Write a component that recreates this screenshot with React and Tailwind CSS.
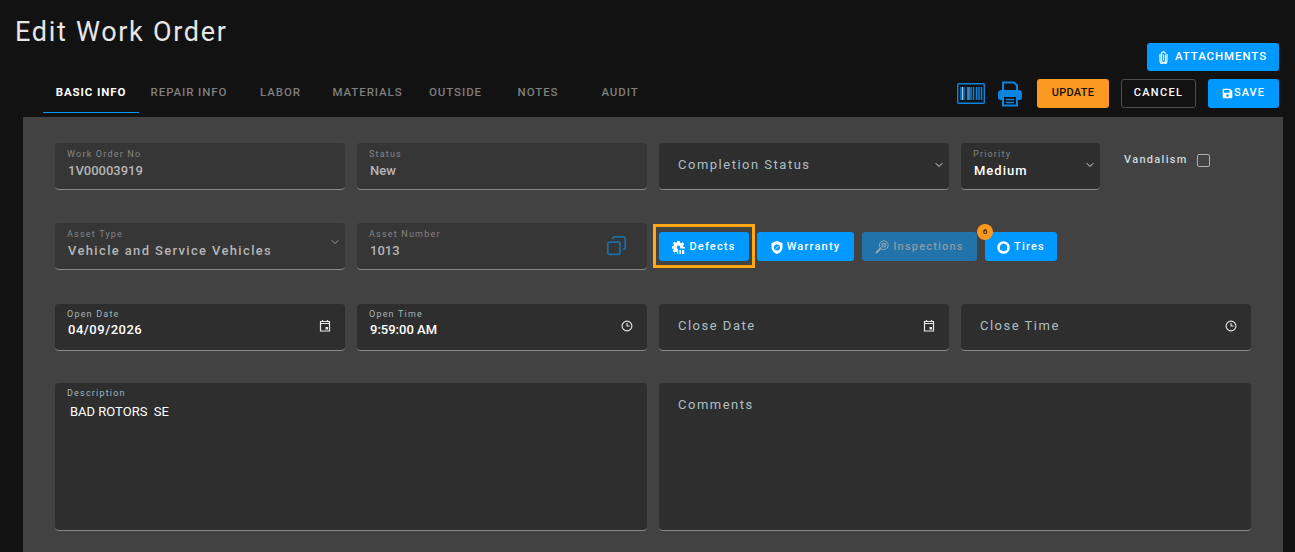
import React from "react";
import { FaSave } from "react-icons/fa";
import { LuChevronDown, LuCopy } from "react-icons/lu";

const tabs = [
  { label: "BASIC INFO", w: "w-[96px]", active: true },
  { label: "REPAIR INFO", w: "w-[100px]" },
  { label: "LABOR", w: "w-[83px]" },
  { label: "MATERIALS", w: "w-[91px]" },
  { label: "OUTSIDE", w: "w-[85px]" },
  { label: "NOTES", w: "w-[80px]" },
  { label: "AUDIT", w: "w-[84px]" },
];

const CalendarIcon = () => (
  <svg width="12" height="13" viewBox="0 0 12 13" fill="none" className="text-[#e8e8e8] mt-[1px]">
    <path d="M1.5 2.5h9v9.5h-9z" stroke="currentColor" strokeWidth="1.2" />
    <path d="M1.5 4.5h9M3.5 1v2M8.5 1v2" stroke="currentColor" strokeWidth="1.2" />
    <rect x="6.5" y="8" width="2.5" height="2.5" fill="currentColor" />
  </svg>
);

const ClockIcon = () => (
  <svg width="12" height="12" viewBox="0 0 12 12" fill="none" className="text-[#e8e8e8] mt-[2px]">
    <circle cx="6" cy="6" r="4.9" stroke="currentColor" strokeWidth="1.1" />
    <path d="M6 3v3h2.6" stroke="currentColor" strokeWidth="1.1" />
  </svg>
);

const Field = ({ label, value, big, icon, dim, className = "", bright }) => (
  <div className={`relative h-[47px] rounded-[4px] border-b border-[#8a8a8a] ${dim ? "bg-[#363636]" : "bg-[#2e2e2e]"} ${className}`}>
    {label && (
      <div className={`pl-3 text-[9px] leading-[10px] tracking-[1.2px] ${bright ? "pt-[5px] text-[#a3b6bd]" : "pt-[6px] text-[#858585]"}`}>
        {label}
      </div>
    )}
    {value && (
      <div className={`pl-[13px] text-[13px] leading-[16px] font-medium ${bright ? "mt-[3px]" : "mt-[4px]"} ${dim ? "text-[#b5b5b5]" : "text-white"}`}>{value}</div>
    )}
    {big && (
      <div className="pl-[19px] pt-[14px] text-[13px] leading-[16px] tracking-[1.5px] text-[#b0bec2]">{big}</div>
    )}
    {icon && <div className="absolute right-[14px] top-[14px] flex">{icon}</div>}
  </div>
);

const BlueBtn = ({ icon, children, className = "" }) => (
  <button className={`h-[29px] pt-[1px] rounded-[3px] text-[11px] font-medium tracking-[1.2px] flex items-center justify-center gap-[4px] ${className}`}>
    {icon}
    {children}
  </button>
);

const PaperclipIcon = () => (
  <svg width="9" height="13" viewBox="0 0 9 13" fill="none" stroke="white" strokeWidth="1.2">
    <path d="M6.500 3.500v6.200a2 2 0 0 1-4 0V2.800a1.900 1.900 0 0 1 3.800 0" />
    <path d="M4.500 3.500v6" />
    <path d="M8 3v6.500a3.500 3.500 0 0 1-7 0V3" />
  </svg>
);

const DefectsIcon = () => (
  <svg width="13" height="13" viewBox="0 0 13 13" fill="white">
    <path d="M5.200 0h2.600l.3 1.700 1 .5 1.600-.9 1.500 2-1.100 1.300.2 1.100 1.700.6v1.200H8.200V6.200a1.700 1.700 0 1 0-3.400 0c0 1 .5 1.600 1.300 1.800V13H5.200l-.3-1.700-1-.5-1.600 1-1.500-2 1.100-1.300-.2-1.100L0 7.700V5.300l1.700-.6.200-1.100L.8 2.300l1.500-1.500 1.600 1 1-.5z" />
    <rect x="7.400" y="9" width="1.500" height="4" />
    <rect x="10" y="9" width="2.200" height="4" />
  </svg>
);

const ShieldIcon = () => (
  <svg width="12" height="13" viewBox="0 0 12 13">
    <path d="M6 0l5.500 2v4.500c0 3-2.500 5.300-5.500 6.500C3 11.800.5 9.500.5 6.500V2z" fill="white" />
    <circle cx="6" cy="6.500" r="3" fill="#0099ff" />
    <path d="M4.800 7.700L7.300 5.200" stroke="white" strokeWidth="1" />
  </svg>
);

const InspectIcon = () => (
  <svg width="14" height="14" viewBox="0 0 14 14" fill="none" stroke="#9aa5ad" strokeWidth="1">
    <circle cx="8.800" cy="5.200" r="4.400" />
    <circle cx="8.800" cy="5.200" r="2" />
    <path d="M5.600 8.400L1 13" strokeWidth="2" />
    <path d="M6 3l5.500 4.500M11.500 3L6 7.500" strokeWidth="0.6" />
  </svg>
);

const TireIcon = () => (
  <svg width="13" height="13" viewBox="0 0 13 13" fill="none">
    <circle cx="6.500" cy="6.500" r="5" stroke="white" strokeWidth="2.600" />
    <path d="M6.500 4.500v-2M4.500 8l-1.500 1M8.500 8l1.500 1" stroke="#0099ff" strokeWidth="0.800" />
    <circle cx="6.500" cy="6.500" r="1" fill="#0099ff" />
  </svg>
);

const BarcodeIcon = () => (
  <svg width="28" height="21" viewBox="0 0 28 21" fill="none" className="text-[#0a84e0]">
    <rect x="0.700" y="0.700" width="26.600" height="19.600" rx="1" stroke="currentColor" strokeWidth="1.400" />
    <path d="M4 4v13M7 4v13M10.500 4v13M14 4v13M16.500 4v13M19.500 4v13M22 4v13M24.500 4v13" stroke="currentColor" strokeWidth="1.500" />
    <path d="M5.500 4v13M12 4v13" stroke="#9ccaf0" strokeWidth="1" />
  </svg>
);

const PrinterIcon = () => (
  <svg width="26" height="26" viewBox="0 0 26 26" fill="none" className="text-[#0a84e0]">
    <path d="M6 10V1.500h11l3 3V10" fill="#121212" stroke="currentColor" strokeWidth="2" />
    <path d="M6 19H3.500A2.500 2.500 0 0 1 1 16.500v-4A3.500 3.500 0 0 1 4.500 9h17a3.500 3.500 0 0 1 3.500 3.500v4a2.500 2.500 0 0 1-2.500 2.500H20" fill="currentColor" />
    <path d="M6 15h14v9.500H6z" fill="#121212" stroke="currentColor" strokeWidth="2" />
    <path d="M9 18.500h8M9 21.500h8" stroke="currentColor" strokeWidth="1.500" />
  </svg>
);

const App = () => {
  return (
    <div className="h-[552px] overflow-hidden bg-[#121212] font-['Roboto','Liberation_Sans',sans-serif]">
      <div className="h-[117px] relative">
        <h1 className="absolute left-[15px] top-[15px] text-[27px] leading-[34px] tracking-[1.700px] text-[#e6e6e6] font-normal">Edit Work Order</h1>
        <div className="flex flex-col items-end pr-[16px] pt-[43px]">
          <button className="w-[132px] h-[28px] rounded-[3px] bg-[#0099ff] text-white text-[11.500px] font-medium tracking-[0.900px] flex items-center justify-center gap-[7px]">
            <PaperclipIcon />
            ATTACHMENTS
          </button>
          <div className="w-full flex items-start mt-[8px]">
            <div className="flex ml-[43px] h-[34px]">
              {tabs.map((t) => (
                <div
                  key={t.label}
                  className={`${t.w} h-[34px] pt-[4px] text-center text-[11.500px] leading-[18px] tracking-[0.900px] ${t.active ? "text-white font-bold border-b border-[#0099ff]" : "text-[#7f7f7f] font-medium"}`}
                >
                  {t.label}
                </div>
              ))}
            </div>
            <div className="ml-auto flex items-center h-[29px]">
              <BarcodeIcon />
              <div className="ml-[12px]"><PrinterIcon /></div>
              <button className="ml-[14px] w-[72px] h-[29px] rounded-[3px] bg-[#fa981f] text-[#1a1208] text-[11px] font-medium tracking-[0.300px]">UPDATE</button>
              <button className="ml-[12px] w-[75px] h-[29px] rounded-[3px] border border-[#4d4d4d] text-white text-[11px] font-medium tracking-[1.300px]">CANCEL</button>
              <button className="ml-[12px] w-[71px] h-[29px] rounded-[3px] bg-[#0099ff] text-white text-[11px] font-medium tracking-[1px] flex items-center justify-center gap-[1px]">
                <FaSave className="text-[11px]" />
                SAVE
              </button>
            </div>
          </div>
        </div>
      </div>

      <div className="ml-[23px] w-[1260px] h-[435px] bg-[#424242] px-[32px] pt-[26px]">
        <div className="grid grid-cols-[290px_290px_290px_290px] gap-x-3">
          <Field dim label="Work Order No" value="1V00003919" />
          <Field dim label="Status" value="New" />
          <Field big="Completion Status" icon={<LuChevronDown className="text-[12px] text-[#e0e0e0] mt-[2px] -mr-[10px]" />} />
          <div className="flex items-start">
            <Field
              label="Priority"
              className="w-[139px]"
              value={<span className="tracking-[1px]">Medium</span>}
              icon={<LuChevronDown className="text-[12px] text-[#e0e0e0] mt-[2px] -mr-[10px]" />}
            />
            <label className="ml-[24px] mt-[9px] flex items-center gap-[9px] text-[11px] leading-[14px] font-medium tracking-[1.300px] text-[#cfd8dc]">
              Vandalism
              <span className="w-[13px] h-[13px] rounded-[2px] border border-[#b0b0b0] mt-[2px]" />
            </label>
          </div>
        </div>

        <div className="grid grid-cols-[290px_290px_1fr] gap-x-3 mt-[33px]">
          <Field dim label="Asset Type" value={<span className="tracking-[1.350px]">Vehicle and Service Vehicles</span>} icon={<LuChevronDown className="text-[12px] text-[#9a9a9a] -mt-[1px] -mr-[10px]" />} />
          <Field dim label="Asset Number" value="1013" icon={<LuCopy className="text-[21px] text-[#1a6ea8] -mt-[2px] -scale-x-100 mr-[6px]" />} />
          <div className="flex items-start gap-[8px] pt-[9px]">
            <div className="-mx-[6px] -mt-[8px] border-3 border-[#ffa812] px-[3px] pt-[5px] pb-[4px]">
              <BlueBtn icon={<DefectsIcon />} className="w-[90px] bg-[#0099ff] text-white">Defects</BlueBtn>
            </div>
            <BlueBtn icon={<ShieldIcon />} className="w-[97px] bg-[#0099ff] text-white">Warranty</BlueBtn>
            <BlueBtn icon={<InspectIcon />} className="w-[115px] bg-[#2273a9] text-[#8d9aa3]">Inspections</BlueBtn>
            <div className="relative">
              <BlueBtn icon={<TireIcon />} className="w-[72px] bg-[#0099ff] text-white">Tires</BlueBtn>
              <span className="absolute -left-[8px] -top-[8px] w-[16px] h-[16px] rounded-full bg-[#fa981f] text-[#1a1208] text-[8px] font-medium flex items-center justify-center">6</span>
            </div>
          </div>
        </div>

        <div className="grid grid-cols-[290px_290px_290px_290px] gap-x-3 mt-[34px]">
          <Field bright label="Open Date" value={<span className="tracking-[0.500px]">04/09/2026</span>} icon={<CalendarIcon />} />
          <Field bright label="Open Time" value="9:59:00 AM" icon={<ClockIcon />} />
          <Field big="Close Date" icon={<CalendarIcon />} />
          <Field big="Close Time" icon={<ClockIcon />} />
        </div>

        <div className="grid grid-cols-[592px_592px] gap-x-3 mt-[32px]">
          <div className="h-[148px] rounded-[4px] border-b border-[#8a8a8a] bg-[#2e2e2e]">
            <div className="pl-3 pt-[5px] text-[9px] leading-[10px] tracking-[1.200px] text-[#a3b6bd]">Description</div>
            <div className="pl-[15px] mt-[6px] text-[13px] leading-[16px] text-white whitespace-pre">BAD ROTORS  SE</div>
          </div>
          <div className="h-[148px] rounded-[4px] border-b border-[#8a8a8a] bg-[#2e2e2e] pl-[19px] pt-[14px] text-[13px] leading-[16px] tracking-[1.500px] text-[#b0bec2]">
            Comments
          </div>
        </div>
      </div>
    </div>
  );
};

export default App;
